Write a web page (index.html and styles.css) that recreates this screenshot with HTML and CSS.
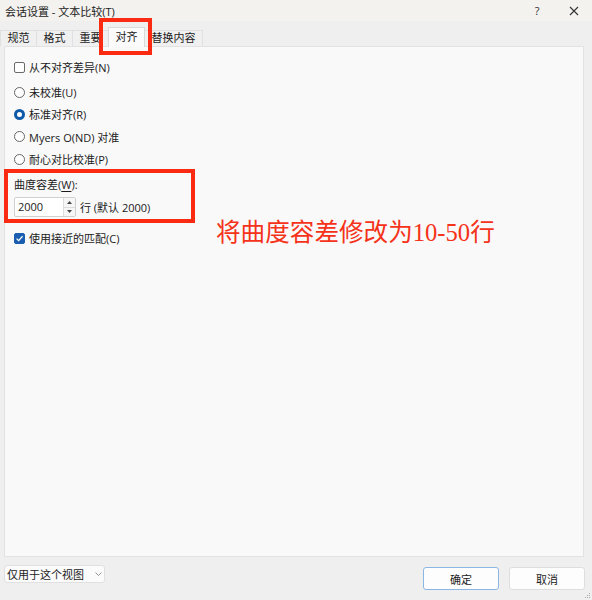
FILE: index.html
```html
<!DOCTYPE html>
<html lang="zh-CN">
<head>
<meta charset="utf-8">
<title>会话设置 - 文本比较</title>
<link rel="stylesheet" href="styles.css">
</head>
<body>
<div class="window">
  <div class="titlebar">
    <span class="title">会话设置 - 文本比较(T)</span>
    <span class="help">?</span>
    <span class="close">
      <svg width="10" height="10" viewBox="0 0 10 10"><path d="M1 1L9 9M9 1L1 9" stroke="#333" stroke-width="1.1" fill="none"/></svg>
    </span>
  </div>

  <div class="tabs">
    <div class="tab">规范</div>
    <div class="tab">格式</div>
    <div class="tab">重要</div>
    <div class="tab active">对齐</div>
    <div class="tab">替换内容</div>
  </div>

  <div class="panel">
    <label class="row check-row first">
      <span class="box"></span>从不对齐差异(N)
    </label>

    <div class="radios">
      <label class="row radio-row"><span class="radio"></span>未校准(U)</label>
      <label class="row radio-row"><span class="radio on"></span>标准对齐(R)</label>
      <label class="row radio-row"><span class="radio"></span>Myers O(ND) 对准</label>
      <label class="row radio-row"><span class="radio"></span>耐心对比校准(P)</label>
    </div>

    <div class="field-label">曲度容差(<u>W</u>):</div>
    <div class="spin-row">
      <div class="spin">
        <span class="spin-value">2000</span>
        <span class="spin-btns">
          <span class="spin-btn"><svg width="5" height="3" viewBox="0 0 5 3"><path d="M0 3L2.5 0L5 3Z" fill="#444"/></svg></span>
          <span class="spin-btn"><svg width="5" height="3" viewBox="0 0 5 3"><path d="M0 0L2.5 3L5 0Z" fill="#444"/></svg></span>
        </span>
      </div>
      <span class="spin-unit">行 (默认 2000)</span>
    </div>

    <label class="row check-row near">
      <span class="box checked"><svg width="9" height="9" viewBox="0 0 9 9"><path d="M1.6 4.6L3.6 6.6L7.6 2.2" stroke="#fff" stroke-width="1.3" fill="none"/></svg></span>使用接近的匹配(C)
    </label>
  </div>

  <div class="footer">
    <div class="combo">
      <span>仅用于这个视图</span>
      <svg width="7" height="4" viewBox="0 0 7 4"><path d="M0.5 0.5L3.5 3.5L6.5 0.5" stroke="#888" stroke-width="0.9" fill="none"/></svg>
    </div>
    <div class="buttons">
      <button class="btn primary">确定</button>
      <button class="btn">取消</button>
    </div>
    <svg class="grip" width="6" height="6" viewBox="0 0 6 6"><g fill="#aaa"><rect x="4" y="0" width="1" height="1"/><rect x="2" y="2" width="1" height="1"/><rect x="4" y="2" width="1" height="1"/><rect x="0" y="4" width="1" height="1"/><rect x="2" y="4" width="1" height="1"/><rect x="4" y="4" width="1" height="1"/></g></svg>
  </div>

  <div class="mark mark-tab"></div>
  <div class="mark mark-tol"></div>
  <div class="note">将曲度容差修改为<span class="num">10-50</span>行</div>
</div>
</body>
</html>
```

FILE: styles.css
```css
* { box-sizing: border-box; }

html, body {
  margin: 0;
  padding: 0;
}

body {
  width: 592px;
  height: 600px;
  background: #efefef;
  font-family: "Open Sans", "Noto Sans CJK SC", sans-serif;
  font-size: 11px;
  color: #1b1b1b;
  overflow: hidden;
}

.window {
  position: relative;
  width: 592px;
  height: 600px;
  display: flex;
  flex-direction: column;
}

/* title bar */
.titlebar {
  height: 21px;
  background: #f4f2ef;
  display: flex;
  align-items: center;
  padding-left: 5px;
}
.title {
  flex: 1;
  font-size: 11px;
  color: #222;
}
.help {
  width: 10px;
  text-align: center;
  font-size: 11px;
  color: #333;
  margin-right: 27px;
}
.close {
  width: 10px;
  height: 10px;
  display: flex;
  margin-right: 13px;
}

/* tab strip */
.tabs {
  height: 25px;
  display: flex;
  align-items: flex-end;
  padding-left: 0;
}
.tab {
  height: 16px;
  padding: 0 6.5px;
  line-height: 14px;
  font-size: 11px;
  color: #222;
  background: #f0f0f0;
  border: 1px solid #e0e0e0;
  border-bottom: none;
  margin-right: -1px;
}
.tab.active {
  line-height: 17px;
  background: #fbfbfb;
  border-color: #dadada;
  position: relative;
  z-index: 1;
  margin-bottom: -1px;
  height: 20px;
}

/* tab page */
.panel {
  height: 511px;
  margin: 0 8px 0 4px;
  background: #f9f9f9;
  border: 1px solid #e2e2e2;
  padding: 0 9px;
  display: flex;
  flex-direction: column;
  align-items: flex-start;
}

.row {
  display: flex;
  align-items: center;
  gap: 4px;
  font-size: 11px;
  color: #1b1b1b;
}
.check-row { height: 16px; }
.check-row.first { margin-top: 12px; }
.check-row.near { margin-top: 13px; }

.box {
  width: 11px;
  height: 11px;
  border: 1px solid #6a6a6a;
  border-radius: 2px;
  background: #fff;
  display: flex;
  align-items: center;
  justify-content: center;
}
.box.checked {
  background: #1b5db0;
  border-color: #1b5db0;
}

.radios {
  margin-top: 6px;
  display: flex;
  flex-direction: column;
}
.radio-row { height: 22.3px; }
.radio {
  width: 11px;
  height: 11px;
  border-radius: 50%;
  border: 1px solid #666;
  background: #fff;
}
.radio.on {
  border: 3.5px solid #0d5aa8;
}

.field-label {
  margin-top: 7px;
  height: 16px;
  line-height: 16px;
  font-size: 11px;
}
.field-label u { text-underline-offset: 2px; }

.spin-row {
  margin-top: 4px;
  display: flex;
  align-items: center;
  gap: 4px;
}
.spin {
  width: 62px;
  height: 20px;
  display: flex;
  background: #fff;
  border: 1px solid #cfcfcf;
  border-radius: 2px;
}
.spin-value {
  flex: 1;
  padding-left: 3px;
  line-height: 18px;
  font-size: 11px;
  color: #1b1b1b;
}
.spin-btns {
  width: 12px;
  display: flex;
  flex-direction: column;
  border-left: 1px solid #dcdcdc;
}
.spin-btn {
  flex: 1;
  display: flex;
  align-items: center;
  justify-content: center;
  background: #f6f6f6;
}
.spin-btn + .spin-btn { border-top: 1px solid #dcdcdc; }
.spin-unit { font-size: 11px; }

/* bottom bar */
.footer {
  position: relative;
  flex: 1;
  display: flex;
  justify-content: space-between;
  align-items: flex-start;
  padding: 0 7px 0 4px;
}
.combo {
  margin-top: 8px;
  width: 101px;
  height: 18px;
  background: #fbfbfb;
  border: 1px solid #e0e0e0;
  border-radius: 3px;
  display: flex;
  align-items: center;
  justify-content: space-between;
  padding: 0 2px 0 2px;
  font-size: 11px;
  color: #222;
}
.buttons {
  margin-top: 10px;
  display: flex;
  gap: 10px;
}
.btn {
  width: 76px;
  height: 23px;
  background: #fdfdfd;
  border: 1px solid #dedede;
  border-radius: 3px;
  font-family: "Open Sans", "Noto Sans CJK SC", sans-serif;
  font-size: 11px;
  color: #1b1b1b;
  padding: 0;
}
.btn.primary {
  border: 1.5px solid #8bb6e3;
}
.grip {
  position: absolute;
  right: 1px;
  bottom: 1px;
}

/* red annotation overlays */
.mark {
  position: absolute;
  border: 4px solid #fb2a12;
}
.mark-tab {
  left: 99px;
  top: 18px;
  width: 53px;
  height: 37px;
}
.mark-tol {
  left: 4px;
  top: 169px;
  width: 191px;
  height: 54px;
}
.note {
  position: absolute;
  left: 216px;
  top: 218px;
  font-family: "Noto Sans CJK SC", sans-serif;
  font-size: 24.6px;
  line-height: 25px;
  color: #f5321a;
  white-space: nowrap;
}
.note .num {
  font-family: "Liberation Serif", serif;
}
```
